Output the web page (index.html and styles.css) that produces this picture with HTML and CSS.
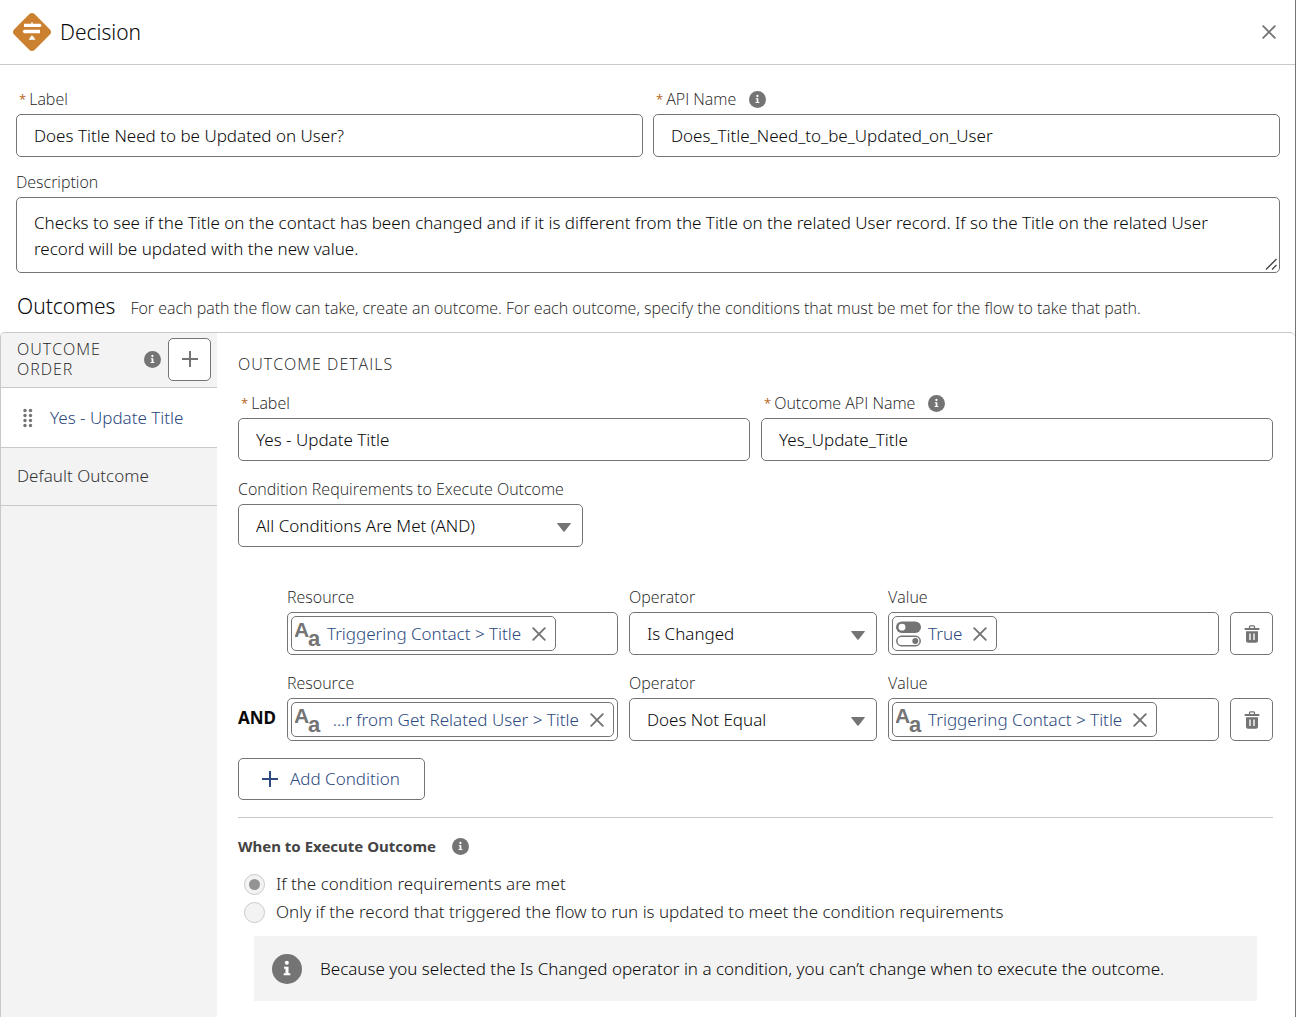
FILE: index.html
```html
<!DOCTYPE html>
<html lang="en">
<head>
<meta charset="utf-8">
<meta name="viewport" content="width=device-width, initial-scale=1">
<title>Decision</title>
<link rel="stylesheet" href="styles.css">
</head>
<body>
<svg class="sprite" aria-hidden="true">
  <symbol id="info" viewBox="0 0 18 18">
    <circle cx="9" cy="9" r="9" fill="#747474"/>
    <circle cx="8.9" cy="5.3" r="1.2" fill="#fff"/>
    <path d="M7.2 7.6h2.7v4h1.1v1.2H7v-1.2h1.1V8.8h-.9z" fill="#fff"/>
  </symbol>
  <symbol id="close" viewBox="0 0 14 14">
    <path d="M1.2 1.2l11.6 11.6M12.8 1.2L1.2 12.8" fill="none" stroke="currentColor" stroke-width="1.9" stroke-linecap="round"/>
  </symbol>
  <symbol id="plus" viewBox="0 0 16 16">
    <path d="M8 .5v15M.5 8h15" fill="none" stroke="currentColor" stroke-width="2" stroke-linecap="round"/>
  </symbol>
  <symbol id="arrow" viewBox="0 0 14 9">
    <path d="M.6 0h12.8q.9 0 .3.8L7.6 8.500q-.6.6-1.2 0L.3.8Q-.3 0 .6 0z" fill="#747474"/>
  </symbol>
  <symbol id="text-type" viewBox="0 0 26 26">
    <text x="-1" y="16" font-size="21" font-weight="700">A</text>
    <text x="13" y="25" font-size="22" font-weight="700">a</text>
  </symbol>
  <symbol id="toggle-type" viewBox="0 0 26 26">
    <rect x="0" y=".5" width="25" height="11.5" rx="5.75" fill="#747474"/>
    <circle cx="6" cy="6.2" r="3.4" fill="#fff"/>
    <rect x=".8" y="15.3" width="23.4" height="9.4" rx="4.7" fill="#fff" stroke="#747474" stroke-width="1.5"/>
    <circle cx="19.3" cy="20" r="3" fill="#747474"/>
  </symbol>
  <symbol id="trash" viewBox="0 0 16 18">
    <path d="M5.5 3.2V1.7q0-.9.9-.9h3.2q.9 0 .9.9v1.5" fill="none" stroke="#747474" stroke-width="1.3"/>
    <rect x=".5" y="3" width="15" height="2" rx=".8" fill="#747474"/>
    <path fill-rule="evenodd" d="M2 6.3h12v9.4q0 2-2 2H4q-2 0-2-2zM5.3 8.6v6.4h1.400V8.600zM9.300 8.600v6.400h1.400V8.600z" fill="#747474"/>
  </symbol>
</svg>

<main class="dialog">
  <header class="dialog-header">
    <svg class="decision-icon" viewBox="0 0 40 40" aria-hidden="true">
      <rect x="5.500" y="5.500" width="29" height="29" rx="4" transform="rotate(45 20 20)" fill="#cb812f"/>
      <path d="M19.3 10.3h1.400v1.400h7.600l1.400 1.700-1.400 1.700H12V11.700h7.300zM12 17.700h16v3.600H12l-1.400-1.800zM19.300 23.800h1.400l2.800 4H16.700z" fill="#fff"/>
    </svg>
    <h1 class="dialog-title">Decision</h1>
    <button class="close-button" type="button" aria-label="Close"><svg class="icon-close"><use href="#close"/></svg></button>
  </header>

  <form class="form">
    <section class="general">
      <div class="columns">
        <div class="field">
          <div class="label-row"><abbr class="required">*</abbr><label for="label">Label</label></div>
          <input class="control" id="label" type="text" value="Does Title Need to be Updated on User?">
        </div>
        <div class="field">
          <div class="label-row"><abbr class="required">*</abbr><label for="api">API Name</label><svg class="icon-info"><use href="#info"/></svg></div>
          <input class="control" id="api" type="text" value="Does_Title_Need_to_be_Updated_on_User">
        </div>
      </div>
      <div class="field">
        <div class="label-row"><label for="description">Description</label></div>
        <textarea class="control description" id="description">Checks to see if the Title on the contact has been changed and if it is different from the Title on the related User record. If so the Title on the related User record will be updated with the new value.</textarea>
      </div>
      <div class="outcomes-heading">
        <h2 class="outcomes-title">Outcomes</h2>
        <p class="outcomes-hint">For each path the flow can take, create an outcome. For each outcome, specify the conditions that must be met for the flow to take that path.</p>
      </div>
    </section>

    <div class="outcomes">
      <nav class="sidebar">
        <div class="sidebar-header">
          <h3 class="caps">Outcome Order</h3>
          <svg class="icon-info"><use href="#info"/></svg>
          <button class="square-button" type="button" aria-label="Add outcome"><svg class="icon-plus"><use href="#plus"/></svg></button>
        </div>
        <a class="outcome selected" href="#yes">
          <svg class="grip" viewBox="0 0 10 20" aria-hidden="true"><g fill="#747474"><circle cx="2" cy="2.500" r="1.700"/><circle cx="7.500" cy="2.500" r="1.700"/><circle cx="2" cy="7.500" r="1.700"/><circle cx="7.500" cy="7.500" r="1.700"/><circle cx="2" cy="12.500" r="1.700"/><circle cx="7.500" cy="12.500" r="1.700"/><circle cx="2" cy="17.500" r="1.700"/><circle cx="7.500" cy="17.500" r="1.700"/></g></svg>
          Yes - Update Title</a>
        <a class="outcome" href="#default">Default Outcome</a>
      </nav>

      <section class="details" id="yes">
        <h3 class="caps">Outcome Details</h3>
        <div class="columns details-columns">
          <div class="field">
            <div class="label-row"><abbr class="required">*</abbr><label for="outcome-label">Label</label></div>
            <input class="control" id="outcome-label" type="text" value="Yes - Update Title">
          </div>
          <div class="field">
            <div class="label-row"><abbr class="required">*</abbr><label for="outcome-api">Outcome API Name</label><svg class="icon-info"><use href="#info"/></svg></div>
            <input class="control" id="outcome-api" type="text" value="Yes_Update_Title">
          </div>
        </div>
        <div class="field requirements">
          <div class="label-row"><label for="logic">Condition Requirements to Execute Outcome</label></div>
          <div class="select"><select class="control" id="logic"><option>All Conditions Are Met (AND)</option></select><svg class="icon-arrow"><use href="#arrow"/></svg></div>
        </div>

        <div class="conditions">
          <div class="condition">
            <span></span>
            <div class="field">
              <div class="label-row"><label for="res1">Resource</label></div>
              <div class="control combo">
                <span class="pill"><svg class="icon-type"><use href="#text-type"/></svg><span class="pill-text">Triggering Contact &gt; Title</span><button class="remove" type="button" aria-label="Remove"><svg class="icon-close"><use href="#close"/></svg></button></span>
                <input class="combo-input" id="res1" type="text">
              </div>
            </div>
            <div class="field">
              <div class="label-row"><label for="op1">Operator</label></div>
              <div class="select"><select class="control" id="op1"><option>Is Changed</option></select><svg class="icon-arrow"><use href="#arrow"/></svg></div>
            </div>
            <div class="field">
              <div class="label-row"><label for="val1">Value</label></div>
              <div class="control combo">
                <span class="pill"><svg class="icon-type"><use href="#toggle-type"/></svg><span class="pill-text">True</span><button class="remove" type="button" aria-label="Remove"><svg class="icon-close"><use href="#close"/></svg></button></span>
                <input class="combo-input" id="val1" type="text">
              </div>
            </div>
            <button class="square-button" type="button" aria-label="Delete condition"><svg class="icon-trash"><use href="#trash"/></svg></button>
          </div>

          <div class="condition">
            <strong class="operator">AND</strong>
            <div class="field">
              <div class="label-row"><label for="res2">Resource</label></div>
              <div class="control combo">
                <span class="pill pill-full"><svg class="icon-type"><use href="#text-type"/></svg><span class="pill-text">...r from Get Related User &gt; Title</span><button class="remove" type="button" aria-label="Remove"><svg class="icon-close"><use href="#close"/></svg></button></span>
                <input class="combo-input" id="res2" type="text">
              </div>
            </div>
            <div class="field">
              <div class="label-row"><label for="op2">Operator</label></div>
              <div class="select"><select class="control" id="op2"><option>Does Not Equal</option></select><svg class="icon-arrow"><use href="#arrow"/></svg></div>
            </div>
            <div class="field">
              <div class="label-row"><label for="val2">Value</label></div>
              <div class="control combo">
                <span class="pill"><svg class="icon-type"><use href="#text-type"/></svg><span class="pill-text">Triggering Contact &gt; Title</span><button class="remove" type="button" aria-label="Remove"><svg class="icon-close"><use href="#close"/></svg></button></span>
                <input class="combo-input" id="val2" type="text">
              </div>
            </div>
            <button class="square-button" type="button" aria-label="Delete condition"><svg class="icon-trash"><use href="#trash"/></svg></button>
          </div>
        </div>

        <button class="add-condition" type="button"><svg class="icon-plus"><use href="#plus"/></svg>Add Condition</button>

        <fieldset class="execute">
          <legend class="execute-title">When to Execute Outcome <svg class="icon-info"><use href="#info"/></svg></legend>
          <label class="choice"><input class="radio" type="radio" name="when" checked disabled>If the condition requirements are met</label>
          <label class="choice"><input class="radio" type="radio" name="when" disabled>Only if the record that triggered the flow to run is updated to meet the condition requirements</label>
        </fieldset>
        <p class="notice"><svg class="icon-notice"><use href="#info"/></svg>Because you selected the Is Changed operator in a condition, you can’t change when to execute the outcome.</p>
      </section>
    </div>
  </form>
</main>
</body>
</html>
```
FILE: styles.css
```css
* { box-sizing: border-box; }

body {
  margin: 0;
  background: #fff;
  color: #080808;
  font: 300 17px/26px "Noto Sans", "Open Sans", sans-serif;
}

h1, h2, h3, p { margin: 0; font-weight: inherit; }
input, select, textarea, button { font: inherit; color: inherit; }
button { cursor: pointer; }
svg { flex: none; display: block; }
.sprite { display: none; }

.dialog {
  display: flex;
  flex-direction: column;
  min-height: 100vh;
  border-right: 1px solid #747474;
}

.dialog-header {
  display: flex;
  align-items: center;
  height: 65px;
  padding: 0 16px 0 12px;
  border-bottom: 1px solid #c9c9c9;
}
.decision-icon { width: 40px; height: 40px; }
.dialog-title { flex: 1; margin-left: 8px; font-size: 21px; }
.close-button, .remove {
  display: flex;
  padding: 3px;
  border: 0;
  background: none;
  color: #747474;
}
.icon-close { width: 14px; height: 14px; }

.form { display: flex; flex: 1; flex-direction: column; }
.general { padding: 25px 15px 0 16px; }

.columns { display: grid; grid-template-columns: 1fr 1fr; gap: 10px; margin-bottom: 16px; }
.details-columns { gap: 11px; margin-bottom: 19px; }

.label-row, .outcomes-hint, .caps {
  color: #222;
  font-family: "Open Sans", "Noto Sans", sans-serif;
  font-size: 16px;
}
.label-row {
  display: flex;
  align-items: center;
  height: 18px;
  margin-bottom: 6px;
  line-height: 18px;
}
.required { margin: 0 3px; color: #b8651b; font-size: 13px; font-weight: 400; }
.icon-info { width: 17px; height: 17px; margin-left: 13px; }

.control {
  display: block;
  width: 100%;
  height: 43px;
  padding: 0 17px;
  border: 1px solid #747474;
  border-radius: 5px;
  background: #fff;
}
.description { height: 76px; padding: 12px 36px 12px 17px; resize: vertical; overflow: hidden; }
.description::-webkit-resizer {
  background: url("data:image/svg+xml,%3Csvg xmlns='http://www.w3.org/2000/svg' width='15' height='15'%3E%3Cpath d='M2 12.500L12.500 2M8 12.500L12.500 8' stroke='%23444' stroke-width='1.300'/%3E%3C/svg%3E") no-repeat right bottom;
}

.outcomes-heading {
  display: flex;
  align-items: baseline;
  gap: 15px;
  padding: 20px 1px 11px;
}
.outcomes-title { font-size: 21px; }

.outcomes {
  display: flex;
  flex: 1;
  overflow: hidden;
  border: solid #c9c9c9;
  border-width: 1px 0 0 1px;
  border-radius: 5px 5px 0 0;
}
.sidebar { flex: none; width: 216px; background: #f3f3f3; }
.sidebar-header {
  display: flex;
  align-items: center;
  height: 55px;
  padding: 0 6px 2px 16px;
  border-bottom: 1px solid #c9c9c9;
}
.sidebar-header .caps { flex: 1; }
.sidebar-header .icon-info { margin: 0 7px; }
.caps {
  line-height: 20px;
  letter-spacing: 1px;
  text-transform: uppercase;
}
.square-button {
  display: flex;
  align-items: center;
  justify-content: center;
  width: 43px;
  height: 43px;
  padding: 0;
  border: 1px solid #747474;
  border-radius: 5px;
  background: #fff;
  color: #747474;
}
.icon-plus { width: 16px; height: 16px; }

.outcome {
  display: flex;
  align-items: center;
  gap: 17px;
  height: 58px;
  padding: 0 16px 2px;
  border-bottom: 1px solid #c9c9c9;
  color: #333;
  text-decoration: none;
}
.selected { height: 60px; padding: 0 16px 0 22px; background: #fff; color: #2c4a80; }
.grip { width: 10px; height: 20px; }

.details { flex: 1; padding: 21px 22px 16px 21px; }
.details > .caps { margin-bottom: 20px; }
.requirements { width: 345px; }

.select { display: grid; align-items: center; }
.select > * { grid-area: 1 / 1; }
.select select { appearance: none; }
.icon-arrow { justify-self: end; width: 14px; height: 9px; margin: 4px 12px 0 0; pointer-events: none; }

.conditions { display: grid; gap: 19px; margin-top: 41px; }
.condition {
  display: grid;
  grid-template-columns: 38px 4fr 3fr 4fr 43px;
  align-items: end;
  gap: 11px;
}
.condition .field { min-width: 0; }
.operator { margin-bottom: 10px; font-weight: 700; }

.combo { display: flex; align-items: center; padding: 0 3px; }
.combo-input { flex: 1; width: 0; min-width: 0; padding: 0; border: 0; outline: 0; background: none; }
.pill {
  display: flex;
  align-items: center;
  height: 35px;
  padding: 0 6px 0 3px;
  border: 1px solid #747474;
  border-radius: 5px;
  color: #2c4a80;
  white-space: nowrap;
}
.pill-full { flex: 1 0 100%; }
.pill-full .pill-text { flex: 1; text-align: right; }
.icon-type { width: 26px; height: 26px; margin-right: 6px; fill: #747474; font-family: "Liberation Sans", sans-serif; }
.remove { margin-left: 8px; }
.icon-trash { width: 16px; height: 18px; }

.add-condition {
  display: flex;
  align-items: center;
  gap: 12px;
  height: 42px;
  margin-top: 17px;
  padding: 0 24px 0 23px;
  border: 1px solid #747474;
  border-radius: 5px;
  background: #fff;
  color: #2c4a80;
}

.execute {
  margin: 17px 0 0;
  padding: 15px 0 0;
  border: 0;
  border-top: 1px solid #c9c9c9;
}
.execute-title {
  display: flex;
  float: left;
  align-items: center;
  width: 100%;
  margin-bottom: 11px;
  padding: 0;
  color: #444;
  font-size: 15px;
  font-weight: 700;
}
.execute-title .icon-info { margin-left: 16px; }
.choice { display: flex; clear: both; align-items: center; height: 28px; padding-left: 6px; color: #222; }
.radio {
  appearance: none;
  display: grid;
  place-items: center;
  width: 21px;
  height: 21px;
  margin: 0 11px 0 0;
  border: 1px solid #c9c9c9;
  border-radius: 50%;
  background: #f3f3f3;
}
.radio:checked::before { content: ""; width: 11px; height: 11px; border-radius: 50%; background: #939393; }

.notice {
  display: flex;
  align-items: center;
  gap: 18px;
  min-height: 65px;
  margin: 10px 16px 0;
  padding: 0 18px;
  background: #f3f3f3;
}
.icon-notice { width: 30px; height: 30px; }
```
